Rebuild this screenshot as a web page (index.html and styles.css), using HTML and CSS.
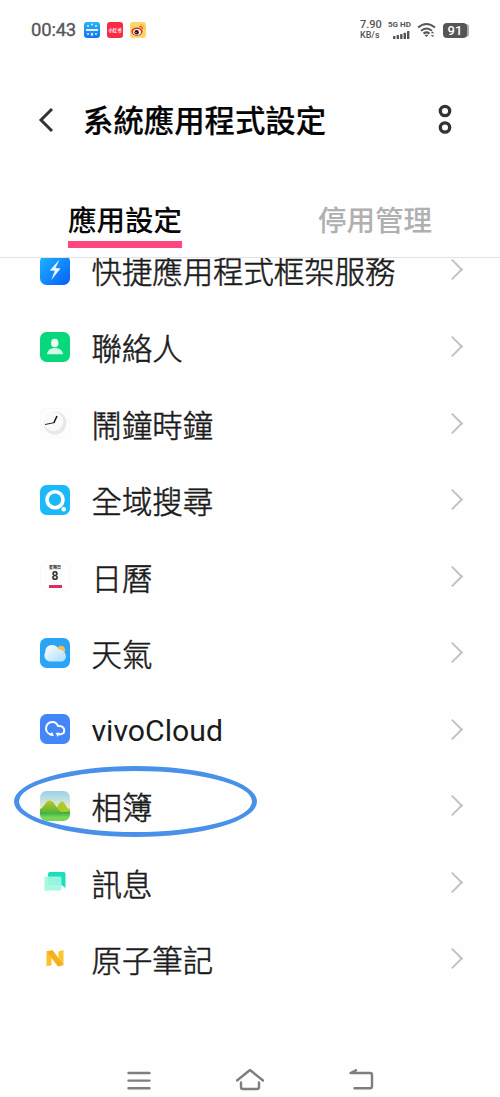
FILE: index.html
```html
<!DOCTYPE html>
<html lang="zh-Hant">
<head>
<meta charset="utf-8">
<title>系統應用程式設定</title>
<link rel="stylesheet" href="styles.css">
</head>
<body>
<div class="screen">
  <div class="status">
    <span class="time">00:43</span>
    <svg class="app" viewBox="0 0 16 16"><defs><linearGradient id="sb" x2="0" y2="1"><stop stop-color="#27b5f5"/><stop offset="1" stop-color="#1475f0"/></linearGradient></defs><rect width="16" height="16" rx="3" fill="url(#sb)"/><g fill="#fff" fill-opacity=".85"><circle cx="8" cy="2.600" r="1"/><circle cx="4" cy="4" r="1"/><circle cx="12" cy="4" r="1"/><circle cx="4" cy="12" r="1"/><circle cx="12" cy="12" r="1"/><path d="M6.500 12l1.500-1.500L9.500 12 8 14.500zM2 7h12v2H2z"/></g></svg>
    <span class="app red">小红书</span>
    <svg class="app" viewBox="0 0 16 16"><rect width="16" height="16" rx="3" fill="#fbd66a"/><ellipse cx="7" cy="9.600" rx="5.600" ry="4.200" fill="#e22a22"/><ellipse cx="7" cy="10" rx="4" ry="2.900" fill="#fff"/><circle cx="6.600" cy="10.200" r="2.200" fill="#151515"/><circle cx="6" cy="10.600" r=".6" fill="#fff"/><path d="M9.500 4.600c2-.4 3.200.7 2.800 2.600" fill="none" stroke="#e22a22" stroke-width="1.100"/><path d="M10 2.500c3-.4 4.800 1.500 4 4.200" fill="none" stroke="#f7b83b" stroke-width="1.100"/></svg>
    <div class="right">
      <div class="speed"><b>7.90</b><span>KB/s</span></div>
      <div class="cell"><span>5G HD</span><svg width="17" height="9" viewBox="0 0 17 9" fill="#555"><rect x="0" y="5" width="2.400" height="3" rx=".5"/><rect x="3.600" y="4" width="2.400" height="4" rx=".5"/><rect x="7.100" y="3" width="2.400" height="5" rx=".5"/><rect x="10.600" y="1.700" width="2.400" height="6.300" rx=".5"/><rect x="14" y="0" width="2.400" height="8" rx=".5"/></svg></div>
      <svg class="wifi" viewBox="0 0 20 16"><g fill="none" stroke="#555" stroke-width="2"><path d="M1 5.500Q9.500-1.600 18 5.500"/><path d="M4 8.700q5.500-4.500 11 0"/><path d="M6.500 11.500q3-2.300 6 0"/></g><path d="M7.300 12.700h4.400L9.500 15z" fill="#555"/><path d="M15.500 9.500l1.800 1.800h-3.600zM15.500 15l1.800-1.800h-3.600z" fill="#555"/></svg>
      <div class="battery">91</div>
    </div>
  </div>
  <header class="header">
    <svg class="back" viewBox="0 0 16 26"><path d="M14 2L3 13l11 11" fill="none" stroke="#333" stroke-width="3"/></svg>
    <h1>系統應用程式設定</h1>
    <svg class="more" viewBox="0 0 14 32"><g fill="none" stroke="#333" stroke-width="3.300"><circle cx="7" cy="7" r="4.700"/><circle cx="7" cy="23.500" r="4.700"/></g></svg>
  </header>
  <nav class="tabs">
    <div class="tab"><span class="active">應用設定</span></div>
    <div class="tab"><span>停用管理</span></div>
  </nav>
  <main class="viewport"><ul class="list">
    <li><svg class="icon" viewBox="0 0 30 30"><defs><linearGradient id="bl" x1="0" y1="0" x2="1" y2="1"><stop stop-color="#1cb9ff"/><stop offset="1" stop-color="#085df7"/></linearGradient></defs><rect width="30" height="30" rx="6.500" fill="url(#bl)"/><path d="M19.500 4.500L9.800 15.600l5 .2-3.500 9.200L20.500 13.400l-5-.3z" fill="#fff" fill-opacity=".93"/></svg><span>快捷應用程式框架服務</span></li>
    <li><svg class="icon" viewBox="0 0 30 30"><rect width="30" height="30" rx="6.500" fill="#09d77c"/><ellipse cx="14.800" cy="11" rx="3.700" ry="4.300" fill="#eafff4"/><path d="M7 22.300c.5-4.300 3.500-6.300 7.800-6.300s7.800 2 8.200 6.300z" fill="#d0fae5"/></svg><span>聯絡人</span></li>
    <li><svg class="icon" viewBox="0 0 30 30"><rect x=".5" y=".5" width="29" height="29" rx="6.500" fill="#fdfdfd" stroke="#f9f9f9"/><circle cx="15" cy="15" r="11.500" fill="#e9e9e9"/><circle cx="13.500" cy="13.500" r="9.700" fill="#fafafa"/><path d="M14 14.500L17 8" stroke="#111" stroke-width="1.500"/><path d="M15 14.500L5 16.500" stroke="#111" stroke-width=".9"/></svg><span>鬧鐘時鐘</span></li>
    <li><svg class="icon" viewBox="0 0 30 30"><rect width="30" height="30" rx="6.500" fill="#1bb8fa"/><circle cx="15" cy="14.700" r="8" fill="none" stroke="#fff" stroke-width="3.600"/><circle cx="23.700" cy="24.200" r="2.300" fill="#fff"/></svg><span>全域搜尋</span></li>
    <li><div class="icon calendar"><small>星期日</small><b>8</b><i></i></div><span>日曆</span></li>
    <li><svg class="icon" viewBox="0 0 30 30"><defs><linearGradient id="cl" x1="0" y1="0" x2="1" y2="1"><stop stop-color="#fff"/><stop offset="1" stop-color="#a9ddfc"/></linearGradient></defs><rect width="30" height="30" rx="6.500" fill="#29a4f7"/><circle cx="21" cy="12" r="4.200" fill="#f9bd48"/><path d="M10 23.500a6 6 0 0 1-4.700-9.200C5 9.700 8.200 7 12 7c3.200 0 5.500 1.600 6.500 4.200 4 .3 7.500 3.300 7.500 7 0 3-2.200 5.300-5 5.300z" fill="url(#cl)"/></svg><span>天氣</span></li>
    <li><svg class="icon" viewBox="0 0 30 30"><rect width="30" height="30" rx="6.500" fill="#4386f8"/><path d="M12.500 20.500C8.500 20.500 6 17.600 6 14.200c0-3.600 2.800-6.300 6.200-6.300 2.900 0 5 1.700 5.800 4.100 3.700-.4 6.300 1.700 6.300 4.400 0 2.500-1.800 3.800-5.300 4.100" fill="none" stroke="#fff" stroke-width="2"/><path d="M12 18l2 4-4.500-.4zM15.500 18.800h4.500l-2.300 4.200z" fill="#fff"/></svg><span class="latin">vivoCloud</span></li>
    <li class="marked"><svg class="icon" viewBox="0 0 30 30"><defs><clipPath id="pc"><rect width="30" height="30" rx="6.500"/></clipPath><linearGradient id="sky" x2="0" y2="1"><stop stop-color="#98d0ec"/><stop offset=".6" stop-color="#eff3cc"/></linearGradient><linearGradient id="hill" x2="0" y2="1"><stop stop-color="#c2c724"/><stop offset="1" stop-color="#48b43c"/></linearGradient><linearGradient id="grass" x2="0" y2="1"><stop stop-color="#26a444"/><stop offset=".6" stop-color="#7bd658"/></linearGradient></defs><g clip-path="url(#pc)"><rect width="30" height="30" fill="url(#sky)"/><path d="M14 20c3-2 5-9.500 8-9.500S26 18 30 18v6H14z" fill="#b0ca2c"/><path d="M0 18c4-1 5.500-8.500 9.500-8.500S16 16 20 20l3 3H0z" fill="url(#hill)"/><path d="M0 21.500c10 1 20 0 30-1V30H0z" fill="url(#grass)"/></g></svg><span>相簿</span><i class="ring"></i></li>
    <li><svg class="icon" viewBox="0 0 30 30"><path d="M10 5h13.500a2 2 0 0 1 2 2v14l-4-3H8V7a2 2 0 0 1 2-2z" fill="#18dfbd"/><path d="M6.500 9.500H20a1.500 1.500 0 0 1 1.500 1.500v10.500a2 2 0 0 1-2 2H8L4.500 24V11.500a2 2 0 0 1 2-2z" fill="#9ff8e0" fill-opacity=".92"/></svg><span>訊息</span></li>
    <li><svg class="icon" viewBox="0 0 30 30"><path d="M6.500 7.500h5v13.700l-5 1z" fill="#fdbf2b"/><path d="M18.500 7.500l5-1.500v15.200l-5 .3z" fill="#fdc42f"/><path d="M6.500 7.500L12.500 6l11 15-5.500 1.500z" fill="#f5b01c"/></svg><span>原子筆記</span></li>
  </ul></main>
  <footer class="keys">
    <svg viewBox="0 0 28 24"><path d="M3.500 4h21M3.500 11.600h21M3.500 19.300h21"/></svg>
    <svg viewBox="0 0 28 24"><path d="M1 11.500L14 1l13 10.500M5 13.500v4.500q0 2 2 2h14q2 0 2-2v-4.500"/></svg>
    <svg viewBox="0 0 28 24"><path d="M9 1.200L3.500 4H23q2 0 2 2v11.300q0 2-2 2H7.500"/></svg>
  </footer>
</div>
</body>
</html>
```
FILE: styles.css
```css
* { box-sizing: border-box; }
body { margin: 0; background: #fefefe; color: #1b1b1b; font-family: Roboto, "Noto Sans CJK TC", sans-serif; }
.screen { width: 500px; height: 1097px; display: flex; flex-direction: column; overflow: hidden; }
svg { display: block; flex: none; }
.status { height: 60px; padding: 0 31px; display: flex; align-items: center; color: #555; }
.time { font-size: 18.500px; width: 46px; margin-right: 7px; white-space: nowrap; letter-spacing: -.2px; -webkit-text-stroke: .3px; }
.app { width: 16px; height: 16px; margin-right: 7px; flex: none; }
.red { background: #f92a45; border-radius: 3px; color: #fff; font: 700 4.300px/16px "Noto Sans CJK SC", sans-serif; text-align: center; }
.right { margin-left: auto; display: flex; align-items: center; }
.speed { width: 22px; font-size: 9px; line-height: 10px; display: flex; flex-direction: column; font-weight: 500; white-space: nowrap; }
.speed b { font-size: 11px; font-weight: 500; }
.cell { width: 24px; margin-left: 6px; font: 700 8px/8px Roboto, sans-serif; display: flex; flex-direction: column; gap: 2px; white-space: nowrap; }
.cell svg { margin-left: 5px; }
.wifi { width: 20px; height: 16px; margin-left: 5px; }
.battery { width: 24px; height: 15px; margin: 0 2px 0 6px; border-radius: 4px; background: #555; color: #fff; font: 500 13px/15px Roboto, sans-serif; text-align: center; box-shadow: 3px 0 0 -1px #aaa; }
.header { height: 120px; padding: 0 48px 0 38px; display: flex; align-items: center; }
.back { width: 16px; height: 26px; }
h1 { margin: 0 auto 0 29px; padding-top: 3px; font-size: 30.400px; line-height: 40px; font-weight: 500; color: #050505; -webkit-text-stroke: .2px; }
.more { width: 14px; height: 32px; }
.tabs { height: 78px; display: flex; border-bottom: 1px solid #e3e3e3; }
.tab { flex: 1; text-align: center; }
.tab span { display: inline-block; height: 68px; padding-top: 23px; font-size: 28.500px; line-height: 38px; font-weight: 500; color: #b0b0b0; }
.tab .active { color: #080808; border-bottom: 7px solid #ff477e; }
.viewport { height: 786px; overflow: hidden; }
.list { list-style: none; margin: -26.300px 0 0; padding: 0; }
li { height: 76.550px; padding: 0 40px; display: flex; align-items: center; position: relative; }
li::after { content: ""; width: 13px; height: 13px; margin-left: auto; border: solid #c2c2c2; border-width: 2px 2px 0 0; transform: rotate(45deg); }
li > span { padding-top: 1px; font-size: 30.400px; line-height: 40px; font-weight: 300; font-family: "Noto Sans CJK TC", sans-serif; -webkit-text-stroke: .55px; }
li > .latin { font-family: Roboto, sans-serif; font-weight: 400; font-size: 30.200px; padding-top: 4px; -webkit-text-stroke: 0; }
.icon { width: 30px; height: 30px; margin-right: 21.500px; flex: none; }
.calendar { display: flex; flex-direction: column; align-items: center; border: 1px solid #f9f9f9; border-radius: 7px; padding-top: 3px; }
.calendar small { font: 700 4px/5px "Noto Sans CJK TC", sans-serif; }
.calendar b { font: 700 12px/13px Roboto, sans-serif; color: #333; }
.calendar i { width: 13px; height: 2.500px; margin-top: 2px; background: #df2d5f; }
.ring { position: absolute; left: 14px; top: -2px; width: 243px; height: 71px; border: 5px solid #4990e9; border-radius: 50%; }
.keys { flex: 1; display: flex; justify-content: center; align-items: center; gap: 83px; padding-top: 21px; }
.keys svg { width: 28px; height: 24px; fill: none; stroke: #7e7e7e; stroke-width: 2.400px; stroke-linecap: round; stroke-linejoin: round; }
```
